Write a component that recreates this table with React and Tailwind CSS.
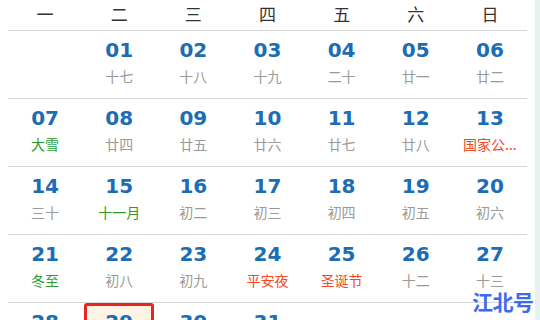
import React from 'react';

const weekdays = ['一', '二', '三', '四', '五', '六', '日'];

const GRAY = 'text-[#9a9a9a]';
const GREEN = 'text-[#2b9a2b]';
const RED = 'text-[#f4481f]';

const weeks = [
  [
    null,
    { d: '01', l: '十七' },
    { d: '02', l: '十八' },
    { d: '03', l: '十九' },
    { d: '04', l: '二十' },
    { d: '05', l: '廿一' },
    { d: '06', l: '廿二' },
  ],
  [
    { d: '07', l: '大雪', c: GREEN },
    { d: '08', l: '廿四' },
    { d: '09', l: '廿五' },
    { d: '10', l: '廿六' },
    { d: '11', l: '廿七' },
    { d: '12', l: '廿八' },
    { d: '13', l: '国家公...', c: RED },
  ],
  [
    { d: '14', l: '三十' },
    { d: '15', l: '十一月', c: GREEN },
    { d: '16', l: '初二' },
    { d: '17', l: '初三' },
    { d: '18', l: '初四' },
    { d: '19', l: '初五' },
    { d: '20', l: '初六' },
  ],
  [
    { d: '21', l: '冬至', c: GREEN },
    { d: '22', l: '初八' },
    { d: '23', l: '初九' },
    { d: '24', l: '平安夜', c: RED },
    { d: '25', l: '圣诞节', c: RED },
    { d: '26', l: '十二' },
    { d: '27', l: '十三' },
  ],
  [
    { d: '28', l: '十四' },
    { d: '29', l: '十五', today: true },
    { d: '30', l: '十六' },
    { d: '31', l: '十七' },
    null,
    null,
    null,
  ],
];

const DayCell = ({ day }) => {
  if (!day) return <div />;

  const content = (
    <>
      <span className="text-[20px] leading-[24px] font-bold text-[#1c6db4] font-['DejaVu_Sans',sans-serif]">
        {day.d}
      </span>
      <span className={`mt-[4px] text-[14px] leading-[20px] ${day.c || GRAY}`}>{day.l}</span>
    </>
  );

  // today gets the red outlined box
  if (day.today) {
    return (
      <div className="mx-[2px] h-full flex flex-col items-center pt-[4px] border-[3px] border-[#e8261f] rounded-[3px] bg-[#fdf4e6]">
        {content}
      </div>
    );
  }

  return <div className="h-full flex flex-col items-center pt-[7px]">{content}</div>;
};

const App = () => {
  return (
    <div className="relative w-[540px] h-[320px] overflow-hidden bg-white flex font-['Noto_Sans_CJK_SC','Noto_Sans',sans-serif]">
      <div className="w-[535px] px-[8px]">
        <div className="h-[31px] grid grid-cols-7 items-center pb-[2px] border-b border-[#d6d6d6]">
          {weekdays.map((w) => (
            <div key={w} className="text-center text-[17px] leading-[22px] text-[#333]">
              {w}
            </div>
          ))}
        </div>
        {weeks.map((week, i) => (
          <div key={i} className="h-[68px] grid grid-cols-7 border-b border-[#d6d6d6]">
            {week.map((day, j) => (
              <DayCell key={j} day={day} />
            ))}
          </div>
        ))}
      </div>
      <div className="flex-1 bg-[#e7f1ed]" />

      <div className="absolute left-[472px] top-[289px] text-[21px] leading-[24px] font-bold text-[#3b6cf0] tracking-[-0.5px]">
        江北号
      </div>
    </div>
  );
};

export default App;
